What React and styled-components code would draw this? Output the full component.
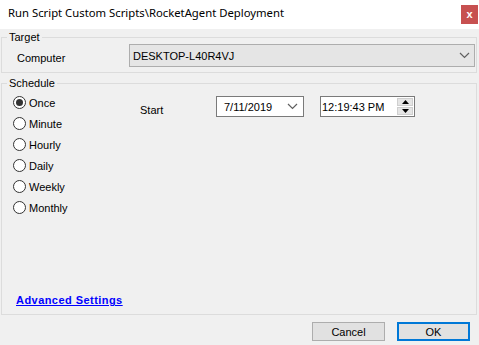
import React from 'react';
import styled, { createGlobalStyle } from 'styled-components';

const GlobalStyle = createGlobalStyle`
  html, body {
    margin: 0;
    padding: 0;
    background: #f0f0f0;
  }
  body {
    font-family: "Liberation Sans", Arial, sans-serif;
    font-size: 11px;
    color: #000;
  }
`;

const schedules = ['Once', 'Minute', 'Hourly', 'Daily', 'Weekly', 'Monthly'];

const Chevron = () => (
  <svg width="11" height="7" viewBox="0 0 11 7">
    <path d="M1 1 L5.5 5.5 L10 1" fill="none" stroke="#606060" strokeWidth="1.2" />
  </svg>
);

const App = () => {
  return (
    <Window>
      <GlobalStyle />
      <TitleBar>
        <Title>Run Script Custom Scripts\RocketAgent Deployment</Title>
        <CloseButton>x</CloseButton>
      </TitleBar>

      <Group>
        <Legend>Target</Legend>
        <TargetRow>
          <FieldLabel>Computer</FieldLabel>
          <Combo>
            <span>DESKTOP-L40R4VJ</span>
            <Chevron />
          </Combo>
        </TargetRow>
      </Group>

      <ScheduleGroup>
        <Legend>Schedule</Legend>
        <ScheduleBody>
          <RadioList>
            {schedules.map((s, i) => (
              <RadioRow key={s}>
                <RadioCircle checked={i === 0} />
                <span>{s}</span>
              </RadioRow>
            ))}
          </RadioList>
          <StartLabel>Start</StartLabel>
          <DateBox>
            <span>7/11/2019</span>
            <Chevron />
          </DateBox>
          <TimeBox>
            <span>12:19:43 PM</span>
            <Spinner>
              <SpinButton>
                <svg width="7" height="4" viewBox="0 0 7 4"><path d="M0 4 L3.5 0 L7 4 Z" fill="#000" /></svg>
              </SpinButton>
              <SpinButton>
                <svg width="7" height="4" viewBox="0 0 7 4"><path d="M0 0 L3.5 4 L7 0 Z" fill="#000" /></svg>
              </SpinButton>
            </Spinner>
          </TimeBox>
        </ScheduleBody>
        <AdvancedLink href="#">Advanced Settings</AdvancedLink>
      </ScheduleGroup>

      <Footer>
        <Button>Cancel</Button>
        <Button primary>OK</Button>
      </Footer>
    </Window>
  );
};

const Window = styled.div`
  width: 479px;
  height: 345px;
  display: flex;
  flex-direction: column;
  overflow: hidden;
`;

const TitleBar = styled.div`
  height: 29px;
  background: #fff;
  display: flex;
  align-items: flex-start;
  justify-content: space-between;
`;

const Title = styled.div`
  font-family: "Noto Sans", sans-serif;
  font-size: 11.3px;
  padding: 5px 0 0 8px;
  line-height: 16px;
`;

const CloseButton = styled.div`
  margin: 5px 1px 0 0;
  width: 17px;
  height: 19px;
  background: #c75050;
  color: #fff;
  font-weight: bold;
  font-size: 11px;
  line-height: 18px;
  text-align: center;
`;

const Group = styled.fieldset`
  margin: 1px 2px 0 1px;
  padding: 0 8px 0 0;
  border: 1px solid #dcdcdc;
  min-width: 0;
`;

const ScheduleGroup = styled(Group)`
  flex: 1;
  margin-top: 3px;
  display: flex;
  flex-direction: column;
`;

const Legend = styled.legend`
  margin-left: 5px;
  padding: 0 2px;
  line-height: 14px;
`;

const TargetRow = styled.div`
  display: flex;
  align-items: flex-start;
  height: 28px;
`;

const FieldLabel = styled.div`
  width: 112px;
  padding: 8px 0 0 15px;
`;

const Combo = styled.div`
  flex: 1;
  height: 21px;
  margin-right: -7px;
  background: #e5e5e5;
  border: 1px solid #adadad;
  display: flex;
  align-items: center;
  justify-content: space-between;
  padding: 0 4px 0 3px;
`;

const ScheduleBody = styled.div`
  display: flex;
  align-items: flex-start;
  padding-top: 6px;
  flex: 1;
`;

const RadioList = styled.div`
  display: flex;
  flex-direction: column;
  gap: 8px;
  padding-left: 11px;
  width: 127px;
`;

const RadioRow = styled.div`
  display: flex;
  align-items: center;
  gap: 3px;
  height: 13px;
`;

const RadioCircle = styled.span`
  box-sizing: border-box;
  width: 13px;
  height: 13px;
  border: 1px solid #333;
  border-radius: 50%;
  background: #fff;
  display: flex;
  align-items: center;
  justify-content: center;
  &::after {
    content: '';
    display: ${({ checked }) => (checked ? 'block' : 'none')};
    width: 7px;
    height: 7px;
    border-radius: 50%;
    background: #333;
  }
`;

const StartLabel = styled.div`
  width: 76px;
  padding-top: 6px;
  line-height: 16px;
`;

const PickerBox = styled.div`
  box-sizing: border-box;
  height: 21px;
  background: #fff;
  border: 1px solid #7a7a7a;
  display: flex;
  align-items: center;
`;

const DateBox = styled(PickerBox)`
  width: 88px;
  justify-content: space-between;
  padding: 0 5px 0 7px;
`;

const TimeBox = styled(PickerBox)`
  width: 95px;
  margin-left: 16px;
  justify-content: space-between;
  padding: 0 1px 0 1px;
`;

const Spinner = styled.div`
  display: flex;
  flex-direction: column;
  gap: 1px;
`;

const SpinButton = styled.div`
  box-sizing: border-box;
  width: 16px;
  height: 8px;
  background: #e5e5e5;
  border: 1px solid #cfcfcf;
  display: flex;
  align-items: center;
  justify-content: center;
`;

const AdvancedLink = styled.a`
  margin: 0 0 8px 14px;
  font-weight: bold;
  font-size: 11px;
  letter-spacing: 0.45px;
  color: #0000ff;
  text-decoration: underline;
  align-self: flex-start;
`;

const Footer = styled.div`
  height: 30px;
  display: flex;
  justify-content: flex-end;
  align-items: flex-start;
  gap: 12px;
  padding: 7px 9px 0 0;
  box-sizing: border-box;
`;

const Button = styled.button`
  box-sizing: border-box;
  width: 73px;
  height: 19px;
  margin: 0;
  padding: 0;
  background: #e1e1e1;
  border: ${({ primary }) => (primary ? '2px solid #0078d7' : '1px solid #adadad')};
  font-family: "Liberation Sans", Arial, sans-serif;
  font-size: 11px;
  color: #000;
`;

export default App;
